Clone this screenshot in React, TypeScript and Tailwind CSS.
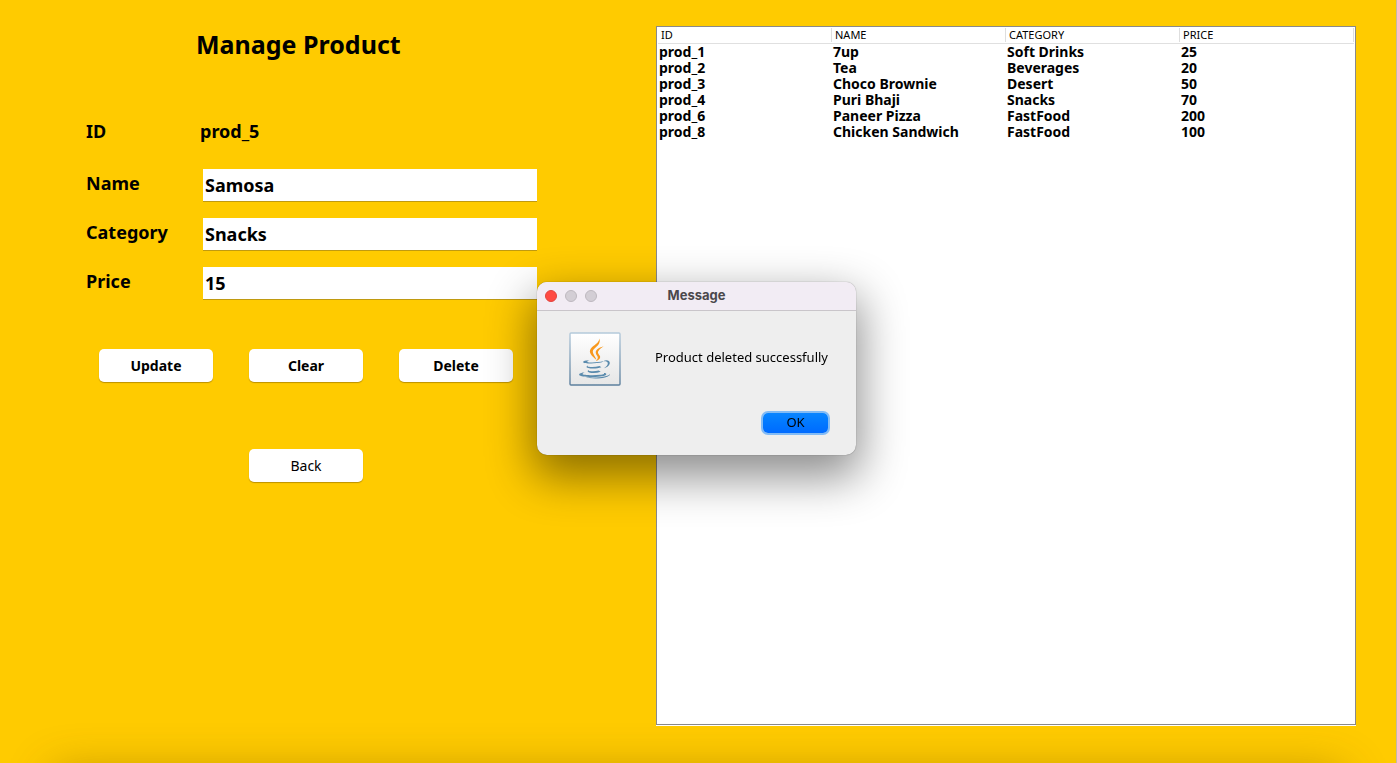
import React from "react";

const products = [
  { id: "prod_1", name: "7up", category: "Soft Drinks", price: 25 },
  { id: "prod_2", name: "Tea", category: "Beverages", price: 20 },
  { id: "prod_3", name: "Choco Brownie", category: "Desert", price: 50 },
  { id: "prod_4", name: "Puri Bhaji", category: "Snacks", price: 70 },
  { id: "prod_6", name: "Paneer Pizza", category: "FastFood", price: 200 },
  { id: "prod_8", name: "Chicken Sandwich", category: "FastFood", price: 100 },
];

const columns = ["ID", "NAME", "CATEGORY", "PRICE"];

function Field({ id, label, value }: { id: string; label: string; value: string }) {
  return (
    <div className="flex items-start">
      <label htmlFor={id} className="w-[117px] shrink-0 text-lg leading-7 font-bold">
        {label}
      </label>
      <input
        id={id}
        type="text"
        defaultValue={value}
        className="h-[33px] min-w-0 flex-1 border-b border-[#c09a10] bg-white px-0.5 text-lg font-bold outline-none"
      />
    </div>
  );
}

function ActionButton({ children, plain }: { children: React.ReactNode; plain?: boolean }) {
  return (
    <button
      type="button"
      className={
        "h-[33px] w-[114px] rounded-[5px] bg-white text-sm shadow-[0_1px_1px_rgba(90,60,0,0.4)] " +
        (plain ? "font-normal" : "font-bold")
      }
    >
      {children}
    </button>
  );
}

function JavaIcon() {
  return (
    <svg width="52" height="54" viewBox="0 0 52 54" aria-hidden="true" className="shrink-0">
      <defs>
        <linearGradient id="tile" x1="0" y1="0" x2="0" y2="1">
          <stop offset="0" stopColor="#ffffff" />
          <stop offset="1" stopColor="#e6e6e6" />
        </linearGradient>
        <linearGradient id="edge" x1="0" y1="0" x2="0" y2="1">
          <stop offset="0" stopColor="#b4cadb" />
          <stop offset="1" stopColor="#5c7f9d" />
        </linearGradient>
      </defs>
      <rect x="1" y="1" width="50" height="52" rx="1" fill="url(#tile)" stroke="url(#edge)" strokeWidth="1.4" />
      <g fill="#f8981d">
        <path d="M30.2 6.500c2.200 5-2.600 7.800-5.400 10.800-2.600 2.900.6 5.400 2.700 10.600-4.700-4-8.300-7.100-5.800-11.100 2.400-3.700 8.700-5.500 8.500-10.300z" />
        <path d="M34.700 14.200c-3.700 1-7.900 2.900-8 6.200 0 2.100 2.100 3.200 2.100 5.200 0 1.600-.9 2.500-2 3.400 3.600-1 5.100-3.100 4-5.300-1-1.800-2.900-2.900-1-5.300 1.100-1.500 3-2.700 4.900-4.200z" />
      </g>
      <g fill="#5b8bad">
        <path d="M20.500 27.900c-3.300.5-6.600 1.100-6.500 2 .2 1.900 12.800 2 19 .4l1.600-1.300c-5.600 1.600-14.400 1.800-16.200.9-.5-.5.700-1.200 2.100-2z" />
        <path d="M34.400 29.300c2.200-1.900 6.700-1.200 6.400 1.900-.3 2.500-3.100 4.300-5.900 5 2.600-1.500 4-3.200 3.900-4.900-.2-1.900-2.200-2.300-4.400-2z" />
        <path d="M18.800 33.400c-1.400.8-2 1.900.4 2.500 3.700.9 9.200.6 13.200-.7l-1.900-1.100c-3.200.8-7.300 1.200-10.600.7-.9-.2-1.600-.7-1.100-1.400z" />
        <path d="M19.800 38c-1.400.7-1.800 1.800.3 2.400 3.500 1 7.900.7 11.600-.7l-2-1.100c-2.800.7-6 .9-8.800.5-.9-.1-1.400-.6-1.100-1.100z" />
        <path d="M16.200 40.300c-3.600.2-6.600 1.500-6 2.700 1.500 2.700 22.700 2.500 26.700-.1 1-.9.200-1.500-1.100-1.900.8 1-1.400 1.400-4.700 1.800-7 .8-18.200.3-17.600-.8.2-.7 1.500-1.300 2.700-1.700z" />
        <path d="M40.800 41.900c-.7 2.300-9.500 3.600-17 3.500-3.200 0-6-.2-7.400-.6 3.800 2.200 14.300 2 19.500.6 3.700-.9 5.600-2.300 4.900-3.500z" />
      </g>
    </svg>
  );
}

function MessageDialog() {
  return (
    <div className="pointer-events-none fixed inset-0 flex items-center justify-center pr-1 pb-[26px]">
      <div
        role="dialog"
        aria-labelledby="dialog-title"
        className="pointer-events-auto w-[319px] overflow-hidden rounded-[10px] bg-[#eeeeee] shadow-[0_0_1px_rgba(0,0,0,0.6),0_18px_46px_4px_rgba(0,0,0,0.45)]"
      >
        <div className="grid h-[29px] grid-cols-[1fr_auto_1fr] items-center border-b border-[#c9c5ca] bg-[#f2ecf4] px-2">
          <div className="flex gap-2">
            <button type="button" aria-label="Close" className="size-3 rounded-full border border-[#e0443e] bg-[#ff4a43]" />
            <button type="button" aria-label="Minimize" className="size-3 rounded-full border border-[#bdb8bf] bg-[#d3ced5]" />
            <button type="button" aria-label="Zoom" className="size-3 rounded-full border border-[#bdb8bf] bg-[#d3ced5]" />
          </div>
          <h2 id="dialog-title" className="pb-0.5 font-[Inter,sans-serif] text-[13px] leading-4 font-bold text-[#4b484c]">
            Message
          </h2>
        </div>
        <div className="flex items-start pt-[21px] pl-8">
          <JavaIcon />
          <p className="pt-[15px] pl-[34px] text-[13px] leading-5">Product deleted successfully</p>
        </div>
        <div className="flex justify-end pt-[27px] pr-7 pb-[22px]">
          <button
            type="button"
            className="h-5 w-[65px] rounded-[5px] bg-linear-to-b from-[#0a85ff] to-[#006aff] text-[13px] leading-[18px] shadow-[0_0_0_2px_#82bbf5]"
          >
            <span className="block h-5">OK</span>
          </button>
        </div>
      </div>
    </div>
  );
}

export default function App() {
  return (
    <div className="relative flex min-h-screen overflow-hidden border-r border-[#c3b9a5] bg-[#ffcb00] font-['Noto_Sans',sans-serif] text-black">
      <main className="w-[656px] shrink-0 pt-[26px] pr-[119px] pl-[86px]">
        <h1 className="pl-[110px] text-[25px] leading-9 font-bold">Manage Product</h1>
        <form onSubmit={(event) => event.preventDefault()}>
          <div className="mt-[53px] flex text-lg leading-8 font-bold">
            <span className="w-[114px]">ID</span>
            <output>prod_5</output>
          </div>
          <div className="mt-[22px] flex flex-col gap-4">
            <Field id="name" label="Name" value="Samosa" />
            <Field id="category" label="Category" value="Snacks" />
            <Field id="price" label="Price" value="15" />
          </div>
          <div className="mt-[49px] flex justify-between pr-6 pl-[13px]">
            <ActionButton>Update</ActionButton>
            <ActionButton>Clear</ActionButton>
            <ActionButton>Delete</ActionButton>
          </div>
          <div className="mt-[67px] flex justify-center pr-6 pl-[13px]">
            <ActionButton plain>Back</ActionButton>
          </div>
        </form>
      </main>

      <section className="mt-[26px] mr-10 mb-[38px] min-w-0 flex-1 border border-[#8a8a8a] bg-white px-px shadow-[0_1px_0_#fff]">
        <table className="w-full table-fixed border-collapse text-left">
          <thead>
            <tr className="h-4 border-b border-[#e0e0e0]">
              {columns.map((column) => (
                <th key={column} scope="col" className="p-0 text-[11px] leading-[14px] font-normal">
                  <div className="my-px border-r border-[#dedede] pl-[3px]">{column}</div>
                </th>
              ))}
            </tr>
          </thead>
          <tbody className="text-sm leading-4 font-bold">
            {products.map((product) => (
              <tr key={product.id}>
                <td className="px-px py-0">{product.id}</td>
                <td className="px-px py-0">{product.name}</td>
                <td className="px-px py-0">{product.category}</td>
                <td className="px-px py-0">{product.price}</td>
              </tr>
            ))}
          </tbody>
        </table>
      </section>

      <div className="pointer-events-none absolute right-16 -bottom-10 left-16 h-5 shadow-[0_0_46px_10px_rgba(90,60,0,0.42)]" />
      <MessageDialog />
    </div>
  );
}
